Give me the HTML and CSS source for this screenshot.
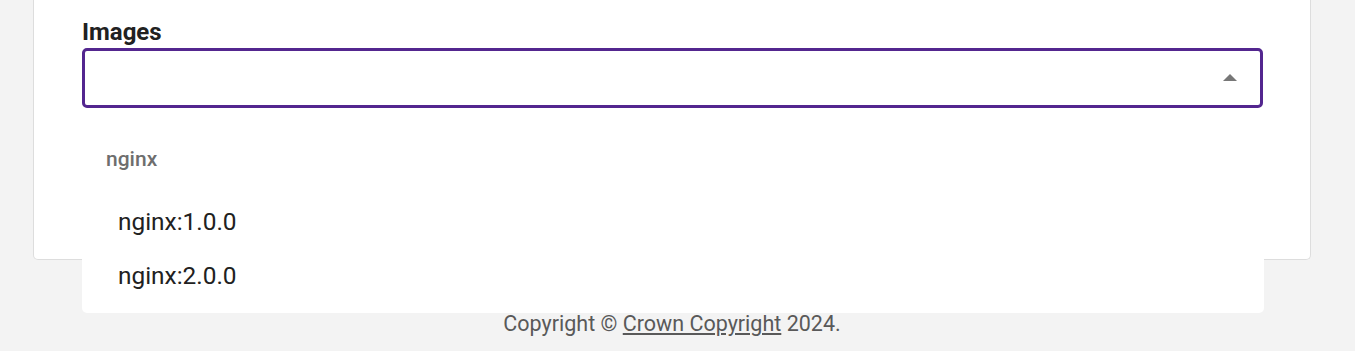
FILE: index.html
```html
<!DOCTYPE html>
<html lang="en">
<head>
<meta charset="utf-8">
<title>Images</title>
<link rel="stylesheet" href="styles.css">
</head>
<body>
<div class="page">
  <main class="card">
    <label class="field-label" for="images">Images</label>
    <div class="select-wrap">
      <div class="select" id="images" role="combobox" aria-expanded="true">
        <span class="select-value"></span>
        <span class="caret"></span>
      </div>
      <div class="menu" role="listbox">
        <div class="group-header">nginx</div>
        <div class="option" role="option">nginx:1.0.0</div>
        <div class="option" role="option">nginx:2.0.0</div>
      </div>
    </div>
  </main>
  <footer class="footer">Copyright © <a href="#" class="footer-link">Crown Copyright</a> 2024.</footer>
</div>
</body>
</html>
```

FILE: styles.css
```css
* { box-sizing: border-box; }

html, body {
  margin: 0;
  padding: 0;
  background: #f3f3f3;
  font-family: Roboto, "Liberation Sans", Arial, sans-serif;
  color: #212121;
}

.page {
  margin-left: 33px;
  width: 1278px;
}

.card {
  display: flex;
  flex-direction: column;
  background: #ffffff;
  border: 1px solid #dddddd;
  border-top: none;
  border-radius: 0 0 5px 5px;
  padding: 18px 47px 151px 48px;
}

.field-label {
  display: block;
  font-size: 24px;
  font-weight: 700;
  line-height: 28px;
  color: #212121;
}

.select-wrap {
  position: relative;
  margin-top: 2px;
}

.select {
  height: 60px;
  border: 3px solid #53268f;
  border-radius: 5px;
  background: #ffffff;
  display: flex;
  align-items: center;
  justify-content: space-between;
  padding: 0 23px 0 16px;
}

.caret {
  width: 0;
  height: 0;
  border-left: 7px solid transparent;
  border-right: 7px solid transparent;
  border-bottom: 7px solid #777777;
  margin-top: -1px;
}

.menu {
  position: absolute;
  top: 100%;
  left: 0;
  width: calc(100% + 1px);
  background: #ffffff;
  border-radius: 0 0 5px 5px;
  padding-bottom: 10px;
  z-index: 10;
}

.group-header {
  padding: 37px 24px 22px;
  font-size: 21px;
  font-weight: 500;
  line-height: 28px;
  color: #6e6e6e;
}

.option {
  height: 54px;
  display: flex;
  align-items: center;
  padding-left: 36px;
  font-size: 24.4px;
  line-height: 28px;
  color: #212121;
}

.footer {
  margin-top: 52px;
  text-align: center;
  font-size: 21.5px;
  line-height: 24px;
  color: #595959;
}

.footer-link {
  color: #595959;
  text-decoration: underline;
}
```
